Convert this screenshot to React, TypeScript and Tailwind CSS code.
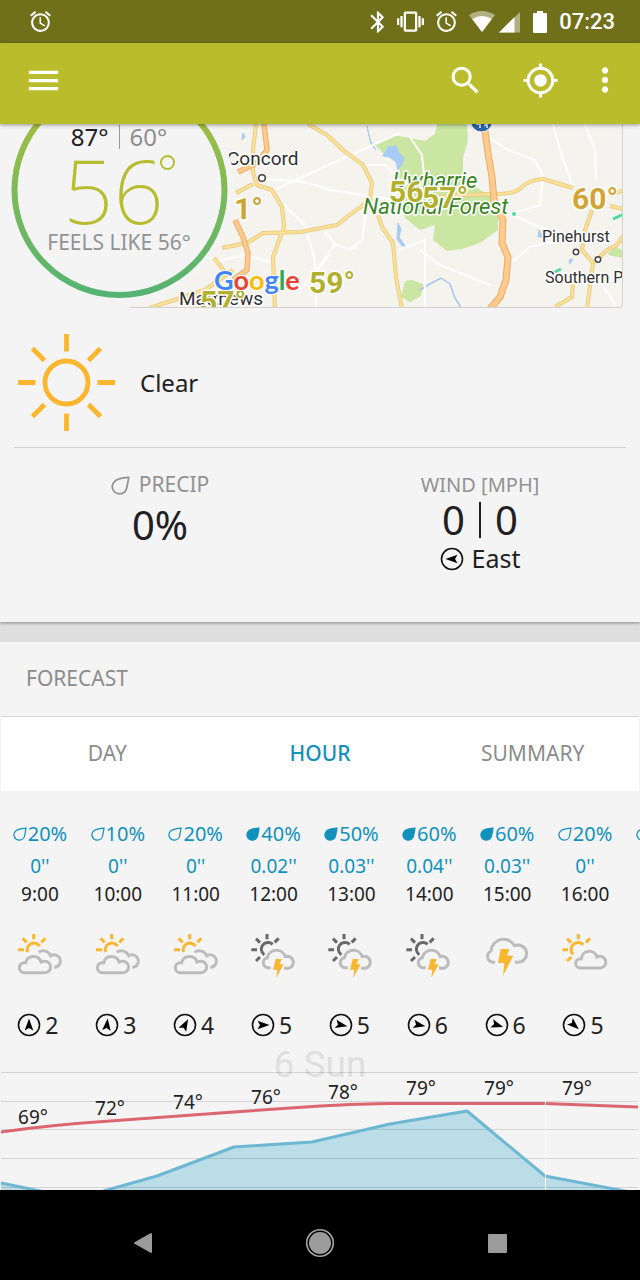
import type { ReactNode } from "react";
import {
  MdAccessAlarm,
  MdBluetooth,
  MdGpsFixed,
  MdMenu,
  MdMoreVert,
  MdSearch,
  MdVibration,
} from "react-icons/md";

type Sky = "mixed" | "sunStorm" | "storm" | "fair";

type Hour = {
  time: string;
  chance: string;
  amount: string;
  sky: Sky;
  wind: string;
  heading: number;
  wet?: boolean;
};

const hours: Hour[] = [
  { time: "9:00", chance: "20%", amount: "0''", sky: "mixed", wind: "2", heading: 0 },
  { time: "10:00", chance: "10%", amount: "0''", sky: "mixed", wind: "3", heading: 6 },
  { time: "11:00", chance: "20%", amount: "0''", sky: "mixed", wind: "4", heading: 28 },
  { time: "12:00", chance: "40%", amount: "0.02''", sky: "sunStorm", wind: "5", heading: 90, wet: true },
  { time: "13:00", chance: "50%", amount: "0.03''", sky: "sunStorm", wind: "5", heading: 102, wet: true },
  { time: "14:00", chance: "60%", amount: "0.04''", sky: "sunStorm", wind: "6", heading: 102, wet: true },
  { time: "15:00", chance: "60%", amount: "0.03''", sky: "storm", wind: "6", heading: 108, wet: true },
  { time: "16:00", chance: "20%", amount: "0''", sky: "fair", wind: "5", heading: 132 },
  { time: "17:00", chance: "20%", amount: "0''", sky: "fair", wind: "5", heading: 132 },
];

function StatusBar() {
  return (
    <div className="flex h-[43px] items-center justify-between bg-[#70701a] pr-[25px] pl-7 text-white">
      <MdAccessAlarm size={25} />
      <div className="flex items-center">
        <MdBluetooth size={26} />
        <MdVibration size={27} className="ml-[6px]" />
        <MdAccessAlarm size={25} className="ml-[10px]" />
        <svg width="26" height="22" viewBox="0 0 26 22" className="ml-[10px]">
          <path d="M0 4Q13 -4 26 4L13 21Z" fill="#fff" opacity=".45" />
          <path d="M3.200 8Q13 2 22.800 8L13 21Z" fill="#fff" />
        </svg>
        <svg width="22" height="22" viewBox="0 0 22 22" className="ml-1">
          <path d="M0 21.500L21 1V21.500Z" fill="#fff" opacity=".45" />
          <path d="M0 21.500L15.500 6V21.500Z" fill="#fff" />
        </svg>
        <svg width="14" height="24" viewBox="0 0 14 24" className="ml-3">
          <path d="M4 1H10V3H13Q14 3 14 4V22Q14 23 13 23H1Q0 23 0 22V4Q0 3 1 3H4Z" fill="#fff" />
        </svg>
        <span className="ml-3 text-[22px] leading-6 font-medium">07:23</span>
      </div>
    </div>
  );
}

function AppBar() {
  return (
    <header className="relative z-10 flex h-[81px] items-center bg-[#babd2b] px-6 pb-[7px] text-white shadow-[0_1px_4px_rgba(0,0,0,0.4)]">
      <button type="button" aria-label="Menu">
        <MdMenu size={39} />
      </button>
      <button type="button" aria-label="Search" className="ml-auto">
        <MdSearch size={37} />
      </button>
      <button type="button" aria-label="My location" className="ml-[38px]">
        <MdGpsFixed size={37} />
      </button>
      <button type="button" aria-label="More" className="-mr-2 ml-[27px]">
        <MdMoreVert size={38} />
      </button>
    </header>
  );
}

const yellowRoads =
  "M256 124L253 150V172L257 185L272 190L282 207L284 227L273 257L275 309M236 193L253 184M308 124L327 135L343 150L363 165L372 183L370 200L347 217L337 225L300 232L263 233L247 243L222 248M378 215L382 227L393 243L396 277L402 309M440 197L463 195L497 194Q515 194 522 187T543 179L573 188M610 206L623 209M592 210L585 230L582 250L593 263L587 309M593 263L607 250L617 245L624 235M573 283L572 297L555 307M150 308L205 290L233 270M214 258L225 272M610 195L624 190";
const orangeRoads = "M264 124L267 150L257 163L238 172M235 220L243 237L248 253L247 270L233 280";
const trunkRoad = "M484 124L488 153L492 177L494 200L503 220L502 243L508 257L506 280L500 297L490 309";

function MapDrawing() {
  return (
    <svg
      viewBox="0 124 640 184"
      preserveAspectRatio="xMinYMin slice"
      className="h-[184px] w-full [grid-area:1/1]"
      role="img"
      aria-label="Weather map"
    >
      <defs>
        <linearGradient id="ring" x1="0" y1="0" x2="0" y2="1">
          <stop offset="0" stopColor="#b5be35" />
          <stop offset="0.5" stopColor="#7dba58" />
          <stop offset="1" stopColor="#55b373" />
        </linearGradient>
        <clipPath id="land">
          <path d="M119 124H623V308H119Z" />
        </clipPath>
      </defs>
      <g clipPath="url(#land)" fill="none" strokeLinejoin="round">
        <path d="M119 124H623V308H119Z" fill="#f5f3ee" />
        <path
          d="M375 145L393 135L410 138L425 141L435 134L437 124H467L468 140L463 158V180L498 200L498 230L480 243L462 249L447 251L433 240L435 225L420 230L405 218L398 190L400 165L385 155ZM405 281L412 280L423 284L421 296L410 302L401 297ZM607 254L616 247L624 251V258L611 256Z"
          fill="#cbe6a3"
        />
        <path
          d="M367 126L370 140L376 150L371 144ZM388 147L396 146L399 153L404 158L402 164L398 170L396 162L390 157L383 156ZM398 223L401 229L399 237L406 247L402 246L397 239ZM539 230L543 237L538 237ZM569 260L573 259L570 264ZM243 133L245 137L242 140Z"
          fill="#a9cbf7"
          stroke="#a9cbf7"
        />
        <path d="M420 290L430 284L441 278L450 284L455 298L462 309" stroke="#a9c4ee" strokeWidth="1.500" />
        <path
          d="M272 191L350 155L400 133M260 180Q300 178 330 190L395 200M284 205L305 225L315 260L316 308M325 232L335 244L350 250L362 240L367 205M335 244L320 265M485 135L508 150L535 160L543 176L540 205L510 214L570 240M553 124L560 150L572 185M585 124L595 150L596 180M508 265L530 247L560 240M420 250L440 265L490 285M398 250L425 240L425 308M365 165L385 165L405 185M410 137L422 155L425 185M600 280L617 308M300 290L330 255M212 262L245 255L270 262"
          stroke="#fff"
          strokeWidth="2"
        />
        <path d={yellowRoads} stroke="#e6c778" strokeWidth="4" />
        <path d={yellowRoads} stroke="#fbe09a" strokeWidth="2.500" />
        <path d={orangeRoads} stroke="#ecae6c" strokeWidth="5.500" />
        <path d={orangeRoads} stroke="#fcca8c" strokeWidth="3.500" />
        <path d={trunkRoad} stroke="#eeaa66" strokeWidth="7" />
        <path d={trunkRoad} stroke="#fdcb8d" strokeWidth="5" />
        <circle cx="481.500" cy="121" r="11" fill="#2d64a9" stroke="#fff" />
        <path d="M476 124H480V128M484 126L487 124V128" stroke="#fff" strokeWidth="1.500" />
        <path d="M613 219L624 214M553 273L561 269" stroke="#4cdba0" strokeWidth="3" />
        <circle cx="514" cy="214" r="2" fill="#4cdba0" />
        <g
          fontFamily="Roboto, sans-serif"
          fill="#303030"
          stroke="#fff"
          strokeWidth="3"
          paintOrder="stroke"
        >
          <text x="227" y="165" fontSize="19">Concord</text>
          <text x="179" y="305" fontSize="19">Matthews</text>
          <text x="542" y="242" fontSize="16">Pinehurst</text>
          <text x="545" y="283" fontSize="16">Southern Pines</text>
          <g fill="#398424" fontStyle="italic" fontSize="22">
            <text x="393" y="188">Uwharrie</text>
            <text x="363" y="214">National Forest</text>
          </g>
        </g>
        <g fill="#fff" stroke="#444" strokeWidth="1.500">
          <circle cx="262" cy="178" r="3.300" />
          <circle cx="576" cy="252" r="2.700" />
          <circle cx="598" cy="259.500" r="2.700" />
        </g>
        <g
          fontFamily="Roboto, sans-serif"
          fontSize="30"
          fontWeight="700"
          fill="#b1b02f"
          stroke="#fff"
          strokeWidth="3"
          paintOrder="stroke"
        >
          <text x="389" y="202">56</text>
          <text x="422" y="208">57°</text>
          <text x="309" y="293">59°</text>
          <text x="200" y="312">57°</text>
          <text x="572" y="209" fill="#d1a434">60°</text>
          <text x="234" y="219" fill="#cca434">1°</text>
        </g>
        <text
          x="214"
          y="290"
          fontFamily="Lato, sans-serif"
          fontSize="27"
          fontWeight="700"
          stroke="#fff"
          strokeWidth="2"
          paintOrder="stroke"
        >
          <tspan fill="#4285f4">G</tspan>
          <tspan fill="#ea4335">o</tspan>
          <tspan fill="#fbbc05">o</tspan>
          <tspan fill="#4285f4">g</tspan>
          <tspan fill="#34a853">l</tspan>
          <tspan fill="#ea4335">e</tspan>
        </text>
      </g>
      <path d="M130 307.500H620Q622.500 307.500 622.500 305V124" fill="none" stroke="#d4d2cf" />
      <circle cx="119.500" cy="190" r="115" fill="#f4f4f4" />
      <circle cx="119.500" cy="190" r="105" fill="none" stroke="url(#ring)" strokeWidth="6" />
    </svg>
  );
}

function CurrentDial() {
  return (
    <div className="flex w-[238px] flex-col items-center [grid-area:1/1]">
      <div className="flex h-[26px] items-center text-[24px]">
        <span className="text-[#202024]">87°</span>
        <span className="mx-[10px] h-6 w-px bg-[#999]" />
        <span className="text-[#8e8e8e]">60°</span>
      </div>
      <div className="flex h-[82px] items-start text-[#b7bd30]">
        <span className="text-[88px] leading-[80px] font-extralight">56</span>
        <span className="-ml-1 mt-[5px] size-[15px] rounded-full border-2 border-[#b7bd30]" />
      </div>
      <div className="text-[21px] leading-5 text-[#929292]">FEELS LIKE 56°</div>
    </div>
  );
}

function SunIcon() {
  return (
    <svg width="97" height="97" viewBox="0 0 97 97" fill="none" stroke="#fbb630" strokeWidth="4.800">
      <circle cx="48.500" cy="48.500" r="21.500" />
      <path d="M48.500 0V17.500M48.500 79.500V97M0 48.500H17.500M79.500 48.500H97M14.500 14.500L26.500 26.500M70.500 70.500L82.500 82.500M82.500 14.500L70.500 26.500M26.500 70.500L14.500 82.500" />
    </svg>
  );
}

function Drop({ size, filled }: { size: number; filled?: boolean }) {
  return (
    <svg width={size} height={size} viewBox="0 0 20 20" stroke="currentColor" strokeWidth="1.800" fill={filled ? "currentColor" : "none"}>
      <path d="M18.500 1.500C12 2 6 2.500 3 6.500C-0.500 11 2 18.500 9 18.800C13.500 18.800 16.500 15.500 16.800 11.500C17.200 8 18.500 5 18.500 1.500Z" />
    </svg>
  );
}

function WindArrow({ heading }: { heading: number }) {
  return (
    <svg width="24" height="24" viewBox="-12 -12 24 24">
      <circle r="10.500" fill="none" stroke="#111" strokeWidth="1.600" />
      <path d="M0 -6.500L4.300 5.500L0 3L-4.300 5.500Z" fill="#000" transform={`rotate(${heading})`} />
    </svg>
  );
}

const skyArt: Record<Sky, { box: string; art: ReactNode }> = {
  mixed: {
    box: "42 360 156 156",
    art: (
      <>
        <path stroke="#fbb630" d="M83 426A20 20 0 0 1 119 409M101 372V388M54 419H72M68 385L80 397M136 385L124 397" />
        <path d="M73 488A15 15 0 0 1 73 458H77A24 24 0 0 1 123 456Q128 454 135 454A17 17 0 0 1 135 488ZM116 427A24 24 0 0 1 152 437A19 19 0 1 1 163 472" />
      </>
    ),
  },
  sunStorm: {
    box: "54 360 156 156",
    art: (
      <>
        <path stroke="#686868" d="M128 403A20 20 0 1 0 103 434M111 372V388M64 419H81M78 386L90 398M146 385L134 397M78 453L90 441" />
        <path d="M122 473H118A15 15 0 0 1 112 443A28 28 0 0 1 166 440A18 18 0 1 1 166 474H162" />
        <path d="M137 447H155L149 463H161L139 503L142 479H129Z" fill="#fbb630" stroke="none" />
      </>
    ),
  },
  storm: {
    box: "153 360 156 156",
    art: (
      <>
        <path d="M195 457H188A18 18 0 0 1 183 423A38 38 0 0 1 254 407A26 26 0 1 1 262 457H254" />
        <path d="M212 417H238L231 437H250L219 497L223 459H204Z" fill="#fbb630" stroke="none" />
      </>
    ),
  },
  fair: {
    box: "387 360 156 156",
    art: (
      <>
        <path stroke="#fbb630" d="M460 404A20 20 0 1 0 429 433M445 372V388M397 419H414M411 386L423 398M480 385L468 397M411 453L424 441" />
        <path d="M451 474A14 14 0 0 1 451 446H454A24 24 0 0 1 501 441Q504 439 510 439A17 17 0 0 1 510 474Z" />
      </>
    ),
  },
};

function SkyIcon({ sky }: { sky: Sky }) {
  const { box, art } = skyArt[sky];
  return (
    <svg width="52" height="52" viewBox={box} fill="none" stroke="#bcbcbc" strokeWidth="9" className="mx-auto">
      {art}
    </svg>
  );
}

function HourTable() {
  return (
    <div className="overflow-hidden pt-[27px] pl-px">
      <table className="w-[701px] table-fixed border-collapse text-center text-[#222] [&_td]:p-0 [&_th]:p-0">
        <tbody>
          <tr className="h-8 text-[20px] leading-6 text-[#1291bd]">
            {hours.map((h) => (
              <td key={h.time}>
                <span className="flex items-center justify-center gap-px">
                  <Drop size={14} filled={h.wet} />
                  {h.chance}
                </span>
              </td>
            ))}
          </tr>
          <tr className="h-8 text-[19px] leading-6 text-[#1291bd]">
            {hours.map((h) => (
              <td key={h.time}>{h.amount}</td>
            ))}
          </tr>
          <tr className="h-6 text-[19px] leading-6">
            {hours.map((h) => (
              <th key={h.time} scope="col" className="font-normal">
                {h.time}
              </th>
            ))}
          </tr>
          <tr className="h-[99px]">
            {hours.map((h) => (
              <td key={h.time}>
                <SkyIcon sky={h.sky} />
              </td>
            ))}
          </tr>
          <tr className="h-10 text-[23px] leading-7">
            {hours.map((h) => (
              <td key={h.time}>
                <span className="flex items-center justify-center gap-1 pr-1">
                  <WindArrow heading={h.heading} />
                  {h.wind}
                </span>
              </td>
            ))}
          </tr>
        </tbody>
      </table>
    </div>
  );
}

const temps = [
  { x: 33, y: 1124, label: "69°" },
  { x: 110, y: 1115, label: "72°" },
  { x: 188, y: 1109, label: "74°" },
  { x: 266, y: 1104, label: "76°" },
  { x: 343, y: 1099, label: "78°" },
  { x: 421, y: 1095, label: "79°" },
  { x: 499, y: 1095, label: "79°" },
  { x: 577, y: 1095, label: "79°" },
];

function TemperatureChart() {
  return (
    <svg viewBox="0 1045 640 145" preserveAspectRatio="xMinYMin slice" className="h-[145px] w-full">
      <text x="320" y="1077" textAnchor="middle" fontFamily="Roboto, sans-serif" fontSize="37" fill="#dfdfdf">
        6 Sun
      </text>
      <path d="M106 1190L157 1176L234 1147L312 1142L390 1124L467 1111L545 1176L620 1190Z" fill="#bbdde8" />
      <path d="M1 1190V1183L38 1190Z" fill="#bbdde8" />
      <path
        d="M1 1072.500H638M1 1101.500H638M1 1129.500H638M1 1158.500H638M1 1187.500H638"
        stroke="#000"
        strokeOpacity=".13"
      />
      <g fill="none" strokeWidth="3" strokeLinejoin="round">
        <path d="M1 1183L45 1192M100 1192L157 1176L234 1147L312 1142L390 1124L467 1111L545 1176L630 1192" stroke="#6cb7d2" />
        <path d="M1 1132Q50 1125 110 1121L234 1112L320 1106Q370 1103 400 1103.500H545L638 1107" stroke="#dc6670" />
      </g>
      <path d="M545.500 1098V1190" stroke="#f8f8f8" />
      <g fontSize="19" fill="#222" textAnchor="middle">
        {temps.map((t) => (
          <text key={t.x} x={t.x} y={t.y}>
            {t.label}
          </text>
        ))}
      </g>
    </svg>
  );
}

export default function App() {
  return (
    <div className="flex min-h-screen flex-col bg-[#f4f4f4] font-['Noto_Sans',sans-serif] text-[#202022]">
      <div className="font-[Roboto,sans-serif]">
        <StatusBar />
      </div>
      <AppBar />
      <main className="flex-1">
        <section className="relative pb-[45px] shadow-[0_1px_3px_rgba(0,0,0,0.4)]">
          <div className="grid">
            <MapDrawing />
            <div className="relative [grid-area:1/1]">
              <CurrentDial />
            </div>
          </div>
          <div className="mx-[14px] flex items-center gap-[25px] border-b border-[#cfcfcf] pt-[26px] pb-4 pl-1 text-[24px]">
            <SunIcon />
            <span>Clear</span>
          </div>
          <div className="grid grid-cols-2 pt-[23px] text-center">
            <div>
              <h2 className="flex h-7 items-center justify-center gap-[9px] text-[21px] text-[#929292]">
                <Drop size={19} />
                PRECIP
              </h2>
              <p className="text-[40px] leading-[52px]">0%</p>
            </div>
            <div>
              <h2 className="flex h-7 items-center justify-center text-[20px] text-[#929292]">WIND [MPH]</h2>
              <div className="flex h-[42px] items-center justify-center text-[40px]">
                <span>0</span>
                <span className="mx-[14px] h-9 w-[2px] bg-[#202022]" />
                <span>0</span>
              </div>
              <p className="flex h-9 items-center justify-center gap-2 text-[25px]">
                <WindArrow heading={-90} />
                East
              </p>
            </div>
          </div>
        </section>
        <div className="h-5 bg-[#dfdfdf]" />
        <section className="relative">
          <h2 className="flex h-[74px] items-center px-[26px] text-[21px] text-[#8c8c8c]">FORECAST</h2>
          <div role="tablist" className="mx-px grid h-[75px] grid-cols-3 border-t border-[#d6d6d6] bg-white text-[21px] text-[#8c8c8c]">
            <button type="button" role="tab" aria-selected="false">
              DAY
            </button>
            <button type="button" role="tab" aria-selected="true" className="font-medium text-[#1291bd]">
              HOUR
            </button>
            <button type="button" role="tab" aria-selected="false">
              SUMMARY
            </button>
          </div>
          <HourTable />
          <TemperatureChart />
        </section>
      </main>
      <nav className="grid h-[90px] grid-cols-3 bg-black px-[54px] pt-4">
        <button type="button" aria-label="Back" className="flex items-center justify-center">
          <svg width="20" height="22" viewBox="0 0 20 22" fill="#9b9b9b" stroke="#9b9b9b" strokeLinejoin="round" strokeWidth="2">
            <path d="M2 11L18 2V20Z" />
          </svg>
        </button>
        <button type="button" aria-label="Home" className="flex items-center justify-center">
          <svg width="30" height="30" viewBox="0 0 30 30">
            <circle cx="15" cy="15" r="13.300" fill="none" stroke="#a6a6a6" strokeWidth="1.600" />
            <circle cx="15" cy="15" r="11" fill="#9b9b9b" />
          </svg>
        </button>
        <button type="button" aria-label="Recent apps" className="flex items-center justify-center">
          <span className="size-[19px] rounded-[1px] bg-[#9b9b9b]" />
        </button>
      </nav>
    </div>
  );
}
